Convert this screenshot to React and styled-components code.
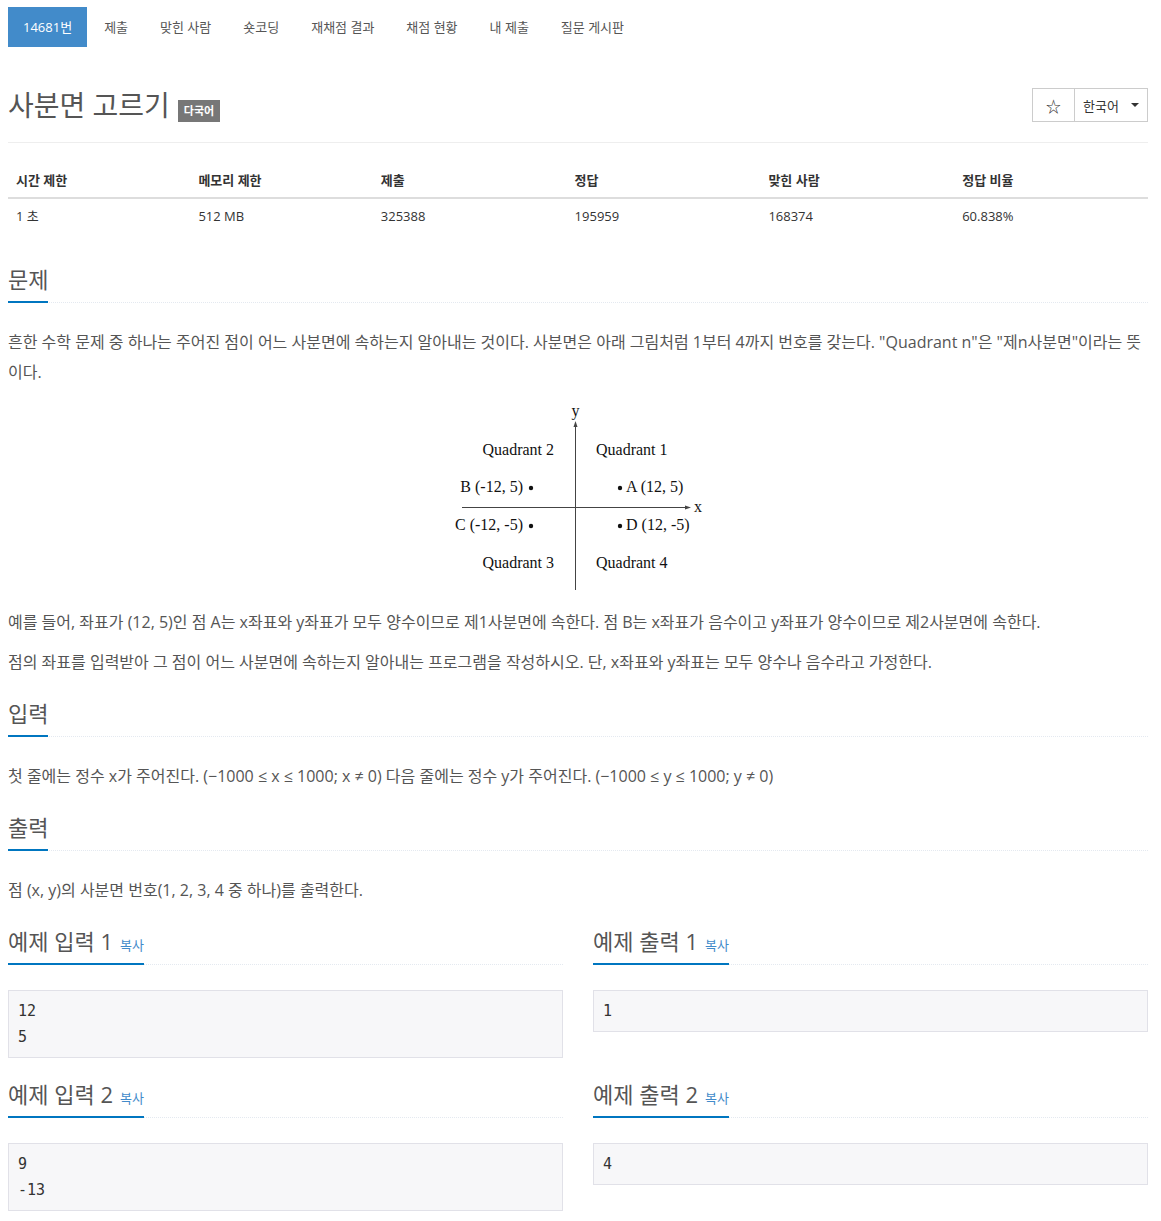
import React from "react";
import styled, { createGlobalStyle } from "styled-components";

const Global = createGlobalStyle`
  html, body { margin: 0; padding: 0; background: #fff; }
  body {
    font-family: "Open Sans", "Noto Sans CJK KR", sans-serif;
    font-size: 13px;
    color: #555;
  }
  * { box-sizing: border-box; }
`;

const Page = styled.div`
  width: 1140px;
  margin-left: 8px;
  padding-top: 7px;
`;

const Nav = styled.ul`
  display: flex;
  list-style: none;
  margin: 0;
  padding: 0;
`;

const NavItem = styled.li`
  margin-right: 2px;
  padding: 0 15px 2px;
  height: 40px;
  display: flex;
  align-items: center;
  font-size: 13px;
  color: ${(p) => (p.$active ? "#fff" : "#555")};
  background: ${(p) => (p.$active ? "#428bca" : "transparent")};
`;

const HeaderRow = styled.div`
  display: flex;
  align-items: flex-start;
  justify-content: space-between;
  margin-top: 40px;
  padding-bottom: 19px;
  border-bottom: 1px solid #eee;
`;

const Title = styled.h1`
  margin: 0;
  font-size: 28px;
  font-weight: 400;
  line-height: 36px;
  color: #555;
  display: flex;
  align-items: center;
  gap: 8px;
`;

const Badge = styled.span`
  background: #777;
  color: #fff;
  font-size: 11px;
  font-weight: 600;
  padding: 3px 6px;
  line-height: 16px;
  margin-top: 12px;
`;

const BtnGroup = styled.div`
  display: flex;
  margin-top: 1px;
`;

const Btn = styled.div`
  height: 34px;
  display: flex;
  align-items: center;
  gap: 12px;
  padding: 0 ${(p) => (p.$pad || 12)}px;
  border: 1px solid #ccc;
  margin-left: ${(p) => (p.$join ? "-1px" : "0")};
  font-size: ${(p) => (p.$icon ? "15px" : "13px")};
  color: #333;
`;

const Caret = styled.span`
  width: 0;
  height: 0;
  border-left: 4px solid transparent;
  border-right: 4px solid transparent;
  border-top: 4px solid #333;
`;

const Table = styled.table`
  width: 100%;
  border-collapse: collapse;
  margin-top: 20px;
  margin-bottom: 31px;
  font-size: 13px;
  color: #333;
`;

const Th = styled.th`
  text-align: left;
  font-weight: 700;
  padding: 8px;
  line-height: 18px;
  border-bottom: 2px solid #ddd;
  width: ${(p) => p.$w};
`;

const Td = styled.td`
  padding: 8px;
  line-height: 18px;
`;

const Headline = styled.div`
  margin-top: ${(p) => (p.$inGrid ? 11 : 21)}px;
  margin-bottom: ${(p) => (p.$inGrid ? 25 : 24)}px;
  border-bottom: 1px dotted #e4e9f0;
`;

const H2 = styled.h2`
  display: inline-block;
  margin: 0 0 -1px 0;
  font-size: 22px;
  font-weight: 400;
  line-height: 30px;
  padding-bottom: 7px;
  border-bottom: 2px solid #0076c0;
  color: #555;
`;

const CopyLink = styled.span`
  font-size: 13px;
  line-height: 1;
  margin-left: 7px;
  color: #428bca;
`;

const Para = styled.p`
  margin: 0 0 10px 0;
  font-size: 16px;
  line-height: 30px;
  color: #555;
`;

const Figure = styled.div`
  display: flex;
  justify-content: center;
  height: 200px;
  margin-bottom: 10px;
`;

const Samples = styled.div`
  display: grid;
  grid-template-columns: 1fr 1fr;
  column-gap: 30px;
`;

const Pre = styled.pre`
  margin: 0 0 10px 0;
  padding: 7px 9px;
  font-family: "DejaVu Sans Mono", monospace;
  font-size: 15px;
  line-height: 26px;
  color: #333;
  background: #f7f7f9;
  border: 1px solid #e1e1e8;
`;

function Diagram() {
  const t = { fontFamily: "'Liberation Serif', serif", fontSize: 16, fill: "#111" };
  return (
    <svg width="260" height="200" viewBox="0 0 260 200">
      <g stroke="#444" strokeWidth="1" fill="none">
        <line x1="127.5" y1="28" x2="127.5" y2="193" />
        <line x1="14" y1="110.5" x2="240" y2="110.5" />
      </g>
      <path d="M127.5 24 L125.5 30 L129.5 30 Z" fill="#444" />
      <path d="M243 110.5 L237 108.5 L237 112.5 Z" fill="#444" />
      <text x="127.5" y="19" textAnchor="middle" {...t}>y</text>
      <text x="246" y="115" {...t}>x</text>
      <text x="106" y="58" textAnchor="end" {...t}>Quadrant 2</text>
      <text x="148" y="58" {...t}>Quadrant 1</text>
      <text x="75" y="95" textAnchor="end" {...t}>B (-12, 5)</text>
      <circle cx="83" cy="91" r="2.2" fill="#111" />
      <circle cx="172" cy="91" r="2.2" fill="#111" />
      <text x="178" y="95" {...t}>A (12, 5)</text>
      <text x="75" y="133" textAnchor="end" {...t}>C (-12, -5)</text>
      <circle cx="83" cy="129" r="2.2" fill="#111" />
      <circle cx="172" cy="129" r="2.2" fill="#111" />
      <text x="178" y="133" {...t}>D (12, -5)</text>
      <text x="106" y="171" textAnchor="end" {...t}>Quadrant 3</text>
      <text x="148" y="171" {...t}>Quadrant 4</text>
    </svg>
  );
}

const tabs = ["14681번", "제출", "맞힌 사람", "숏코딩", "재채점 결과", "채점 현황", "내 제출", "질문 게시판"];
const cols = [
  ["시간 제한", "1 초", "16%"],
  ["메모리 제한", "512 MB", "16%"],
  ["제출", "325388", "17%"],
  ["정답", "195959", "17%"],
  ["맞힌 사람", "168374", "17%"],
  ["정답 비율", "60.838%", "17%"],
];

function Section({ title, children }) {
  return (
    <>
      <Headline>
        <H2>{title}</H2>
      </Headline>
      {children}
    </>
  );
}

function Sample({ title, data }) {
  return (
    <div>
      <Headline $inGrid>
        <H2>
          {title}
          <CopyLink>복사</CopyLink>
        </H2>
      </Headline>
      <Pre>{data}</Pre>
    </div>
  );
}

export default function App() {
  return (
    <Page>
      <Global />
      <Nav>
        {tabs.map((t, i) => (
          <NavItem key={t} $active={i === 0}>{t}</NavItem>
        ))}
      </Nav>
      <HeaderRow>
        <Title>
          사분면 고르기
          <Badge>다국어</Badge>
        </Title>
        <BtnGroup>
          <Btn $icon $pad={13}>☆</Btn>
          <Btn $join $pad={8}>
            한국어 <Caret />
          </Btn>
        </BtnGroup>
      </HeaderRow>
      <Table>
        <thead>
          <tr>
            {cols.map((c) => (
              <Th key={c[0]} $w={c[2]}>{c[0]}</Th>
            ))}
          </tr>
        </thead>
        <tbody>
          <tr>
            {cols.map((c) => (
              <Td key={c[0]}>{c[1]}</Td>
            ))}
          </tr>
        </tbody>
      </Table>
      <Section title="문제">
        <Para>
          흔한 수학 문제 중 하나는 주어진 점이 어느 사분면에 속하는지 알아내는 것이다. 사분면은 아래 그림처럼 1부터 4까지 번호를 갖는다. "Quadrant n"은 "제n사분면"이라는 뜻이다.
        </Para>
        <Figure>
          <Diagram />
        </Figure>
        <Para>
          예를 들어, 좌표가 (12, 5)인 점 A는 x좌표와 y좌표가 모두 양수이므로 제1사분면에 속한다. 점 B는 x좌표가 음수이고 y좌표가 양수이므로 제2사분면에 속한다.
        </Para>
        <Para>
          점의 좌표를 입력받아 그 점이 어느 사분면에 속하는지 알아내는 프로그램을 작성하시오. 단, x좌표와 y좌표는 모두 양수나 음수라고 가정한다.
        </Para>
      </Section>
      <Section title="입력">
        <Para>
          첫 줄에는 정수 x가 주어진다. (−1000 ≤ x ≤ 1000; x ≠ 0) 다음 줄에는 정수 y가 주어진다. (−1000 ≤ y ≤ 1000; y ≠ 0)
        </Para>
      </Section>
      <Section title="출력">
        <Para>점 (x, y)의 사분면 번호(1, 2, 3, 4 중 하나)를 출력한다.</Para>
      </Section>
      <Samples>
        <Sample title="예제 입력 1" data={"12\n5"} />
        <Sample title="예제 출력 1" data={"1"} />
        <Sample title="예제 입력 2" data={"9\n-13"} />
        <Sample title="예제 출력 2" data={"4"} />
      </Samples>
    </Page>
  );
}
